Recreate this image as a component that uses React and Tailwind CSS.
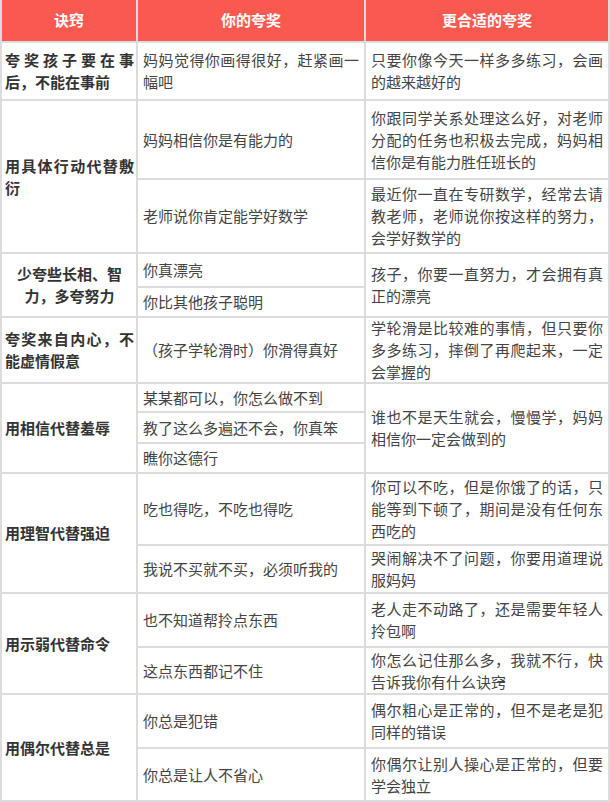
import React from "react";

const F = "font-['Noto_Sans_CJK_SC','Noto_Sans',sans-serif]";

function H({ children, col }) {
  return (
    <div className={`${col} bg-[#f9594f] flex items-center justify-center text-white font-bold text-[15px]`}>
      {children}
    </div>
  );
}

function K({ children, cls = "", center = false }) {
  return (
    <div className={`${cls} col-start-1 bg-white flex items-center pl-[3px] pr-[2px]`}>
      <div className={`w-full text-[15px] leading-[22px] font-bold text-[#333] ${center ? "text-center" : "text-justify"}`}>
        {children}
      </div>
    </div>
  );
}

function C({ children, cls = "", col }) {
  return (
    <div className={`${cls} ${col} bg-white flex items-center px-[5px]`}>
      <div className="w-full text-[15px] leading-[22px] text-[#444] text-justify">{children}</div>
    </div>
  );
}

export default function App() {
  return (
    <div className={`${F} w-[610px] h-[802px] bg-white`}>
      <div className="grid grid-cols-[134px_226px_242px] grid-rows-[41px_56px_77px_72px_32px_28px_64px_27px_29px_28px_70px_46px_52px_45px_52px_51px] gap-[2px] bg-[#dcdcdc] px-[2px] pb-[2px]">
        <H col="col-start-1 row-start-1">诀窍</H>
        <H col="col-start-2 row-start-1">你的夸奖</H>
        <H col="col-start-3 row-start-1">更合适的夸奖</H>

        <K cls="row-start-2">夸奖孩子要在事后，不能在事前</K>
        <C col="col-start-2" cls="row-start-2">妈妈觉得你画得很好，赶紧画一幅吧</C>
        <C col="col-start-3" cls="row-start-2">只要你像今天一样多多练习，会画的越来越好的</C>

        <K cls="row-start-3 row-span-2">用具体行动代替敷衍</K>
        <C col="col-start-2" cls="row-start-3">妈妈相信你是有能力的</C>
        <C col="col-start-3" cls="row-start-3">你跟同学关系处理这么好，对老师分配的任务也积极去完成，妈妈相信你是有能力胜任班长的</C>
        <C col="col-start-2" cls="row-start-4">老师说你肯定能学好数学</C>
        <C col="col-start-3" cls="row-start-4">最近你一直在专研数学，经常去请教老师，老师说你按这样的努力，会学好数学的</C>

        <K cls="row-start-5 row-span-2" center>少夸些长相、智力，多夸努力</K>
        <C col="col-start-2" cls="row-start-5">你真漂亮</C>
        <C col="col-start-3" cls="row-start-5 row-span-2">孩子，你要一直努力，才会拥有真正的漂亮</C>
        <C col="col-start-2" cls="row-start-6">你比其他孩子聪明</C>

        <K cls="row-start-7">夸奖来自内心，不能虚情假意</K>
        <C col="col-start-2" cls="row-start-7">（孩子学轮滑时）你滑得真好</C>
        <C col="col-start-3" cls="row-start-7">学轮滑是比较难的事情，但只要你多多练习，摔倒了再爬起来，一定会掌握的</C>

        <K cls="row-start-8 row-span-3">用相信代替羞辱</K>
        <C col="col-start-2" cls="row-start-8">某某都可以，你怎么做不到</C>
        <C col="col-start-3" cls="row-start-8 row-span-3">谁也不是天生就会，慢慢学，妈妈相信你一定会做到的</C>
        <C col="col-start-2" cls="row-start-9">教了这么多遍还不会，你真笨</C>
        <C col="col-start-2" cls="row-start-10">瞧你这德行</C>

        <K cls="row-start-11 row-span-2">用理智代替强迫</K>
        <C col="col-start-2" cls="row-start-11">吃也得吃，不吃也得吃</C>
        <C col="col-start-3" cls="row-start-11">你可以不吃，但是你饿了的话，只能等到下顿了，期间是没有任何东西吃的</C>
        <C col="col-start-2" cls="row-start-12">我说不买就不买，必须听我的</C>
        <C col="col-start-3" cls="row-start-12">哭闹解决不了问题，你要用道理说服妈妈</C>

        <K cls="row-start-13 row-span-2">用示弱代替命令</K>
        <C col="col-start-2" cls="row-start-13">也不知道帮拎点东西</C>
        <C col="col-start-3" cls="row-start-13">老人走不动路了，还是需要年轻人拎包啊</C>
        <C col="col-start-2" cls="row-start-14">这点东西都记不住</C>
        <C col="col-start-3" cls="row-start-14">你怎么记住那么多，我就不行，快告诉我你有什么诀窍</C>

        <K cls="row-start-15 row-span-2">用偶尔代替总是</K>
        <C col="col-start-2" cls="row-start-15">你总是犯错</C>
        <C col="col-start-3" cls="row-start-15">偶尔粗心是正常的，但不是老是犯同样的错误</C>
        <C col="col-start-2" cls="row-start-16">你总是让人不省心</C>
        <C col="col-start-3" cls="row-start-16">你偶尔让别人操心是正常的，但要学会独立</C>
      </div>
    </div>
  );
}
